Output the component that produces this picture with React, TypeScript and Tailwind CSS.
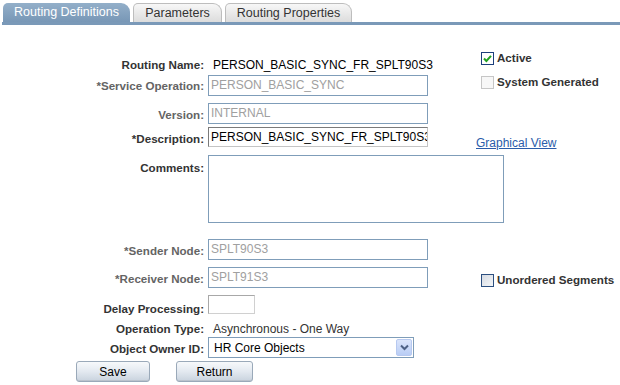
import React from 'react';

const font = "font-['Liberation_Sans',Arial,sans-serif]";

const Label = ({ text, muted, className = '' }: { text: string; muted?: boolean; className?: string }) => (
  <div
    className={`text-right text-[11.6px] leading-[14px] font-bold ${muted ? 'text-[#646464]' : 'text-[#333333]'} ${className}`}
  >
    {text}
  </div>
);

const ReadOnlyBox = ({ value, width = 'w-[220px]' }: { value: string; width?: string }) => (
  <div
    className={`${width} h-[21px] border border-[#7f9db9] bg-white px-[2px] text-[12px] leading-[19px] text-[#a0a0a0] whitespace-nowrap overflow-hidden`}
  >
    {value}
  </div>
);

const CheckBox = ({ checked, variant }: { checked?: boolean; variant: 'active' | 'disabled' | 'plain' }) => {
  const box =
    variant === 'disabled'
      ? 'border-[#c6c6c6] bg-[#f7f7f7]'
      : variant === 'active'
        ? 'border-[#1c3f7c] bg-white'
        : 'border-[#2c4f80] bg-gradient-to-br from-[#d6dbe3] to-[#f4f6f8]';
  return (
    <div className={`w-[13px] h-[13px] border ${box} flex items-center justify-center shrink-0`}>
      {checked ? (
        <svg width="9" height="9" viewBox="0 0 9 9">
          <path d="M1 4.5 L3.4 7 L8 1.8" fill="none" stroke="#21a121" strokeWidth="2" />
        </svg>
      ) : null}
    </div>
  );
};

const Tab = ({ label, active }: { label: string; active?: boolean }) => (
  <div
    className={`h-[19px] flex items-center justify-center rounded-tl-[5px] rounded-tr-[9px] text-[12.5px] ${
      active
        ? 'bg-gradient-to-b from-[#93afc9] to-[#7897b6] text-white'
        : 'border border-b-0 border-[#bdbdbd] bg-gradient-to-b from-[#f7f7f7] to-[#dcdcdc] text-[#333333]'
    }`}
  >
    {label}
  </div>
);

const Button = ({ label, width }: { label: string; width: string }) => (
  <div
    className={`${width} h-[21px] rounded-[3px] border border-[#9aa9b9] bg-gradient-to-b from-[#f7f9fb] via-[#e3e9f0] to-[#c9d3de] flex items-center justify-center text-[12px] text-black shadow-[inset_0_-1px_0_rgba(0,0,0,0.08)]`}
  >
    {label}
  </div>
);

const row = 'grid grid-cols-[204px_277px_1fr] gap-x-0';
const sideLabel = 'text-[11.6px] font-bold text-[#333333] leading-[14px]';

export default function App() {
  return (
    <div className={`${font} w-[620px] h-[385px] bg-white overflow-hidden`}>
      <div className="pt-[3px] pl-[3px] flex gap-[3px]">
        <div className="w-[127px]">
          <Tab label="Routing Definitions" active />
        </div>
        <div className="w-[89px]">
          <Tab label="Parameters" />
        </div>
        <div className="w-[127px]">
          <Tab label="Routing Properties" />
        </div>
      </div>
      <div className="ml-[2px] h-[3px] bg-[#7a99b8]" />

      {/* Routing Name */}
      <div className={`${row} mt-[26px] h-[22px]`}>
        <Label text="Routing Name:" className="pt-[7px]" />
        <div className="pl-[9px] pt-[7px] text-[12px] leading-[14px] text-black">PERSON_BASIC_SYNC_FR_SPLT90S3</div>
        <div className="flex items-center gap-[3px] h-[14px]">
          <CheckBox checked variant="active" />
          <span className={sideLabel}>Active</span>
        </div>
      </div>

      {/* Service Operation */}
      <div className={`${row} mt-[2px] h-[21px] items-center`}>
        <Label text="*Service Operation:" muted />
        <div className="pl-[4px]">
          <ReadOnlyBox value="PERSON_BASIC_SYNC" />
        </div>
        <div className="flex items-center gap-[3px] self-start h-[14px]">
          <CheckBox variant="disabled" />
          <span className={sideLabel}>System Generated</span>
        </div>
      </div>

      {/* Version */}
      <div className={`${row} mt-[7px] h-[21px] items-center`}>
        <Label text="Version:" muted className="pt-[3px]" />
        <div className="pl-[4px]">
          <ReadOnlyBox value="INTERNAL" />
        </div>
        <div />
      </div>

      {/* Description */}
      <div className={`${row} mt-[3px] h-[20px] items-center`}>
        <Label text="*Description:" className="pt-[3px]" />
        <div className="pl-[4px]">
          <div className="w-[220px] h-[20px] border border-[#7a7a7a] border-r-[#c4c4c4] border-b-[#c4c4c4] bg-white px-[2px] text-[12px] leading-[18px] text-black whitespace-nowrap overflow-hidden">
            PERSON_BASIC_SYNC_FR_SPLT90S3
          </div>
        </div>
        <div className="-ml-[5px] self-end mb-[-3px] text-[12px] leading-[14px] text-[#2a5caa] underline">
          Graphical View
        </div>
      </div>

      {/* Comments */}
      <div className={`${row} mt-[8px] h-[68px]`}>
        <Label text="Comments:" className="pt-[6px]" />
        <div className="pl-[4px] col-span-2">
          <div className="w-[296px] h-[68px] border border-[#7f9db9] bg-white" />
        </div>
      </div>

      {/* Sender Node */}
      <div className={`${row} mt-[16px] h-[21px] items-center`}>
        <Label text="*Sender Node:" muted className="pt-[3px]" />
        <div className="pl-[4px]">
          <ReadOnlyBox value="SPLT90S3" />
        </div>
        <div />
      </div>

      {/* Receiver Node */}
      <div className={`${row} mt-[7px] h-[21px] items-center`}>
        <Label text="*Receiver Node:" muted className="pt-[3px]" />
        <div className="pl-[4px]">
          <ReadOnlyBox value="SPLT91S3" />
        </div>
        <div className="flex items-center gap-[3px] self-end mb-[1px]">
          <CheckBox variant="plain" />
          <span className={sideLabel}>Unordered Segments</span>
        </div>
      </div>

      {/* Delay Processing */}
      <div className={`${row} mt-[7px] h-[19px]`}>
        <Label text="Delay Processing:" className="self-end mb-[-2px]" />
        <div className="pl-[4px]">
          <div className="w-[47px] h-[19px] border border-[#a8a8a8] border-r-[#d0d0d0] border-b-[#d0d0d0] bg-white" />
        </div>
        <div />
      </div>

      {/* Operation Type */}
      <div className={`${row} mt-[8px] h-[14px]`}>
        <Label text="Operation Type:" />
        <div className="pl-[9px] text-[12px] leading-[14px] text-[#333333]">Asynchronous - One Way</div>
        <div />
      </div>

      {/* Object Owner ID */}
      <div className={`${row} mt-[1px] h-[21px] items-center`}>
        <Label text="Object Owner ID:" className="pt-[3px]" />
        <div className="pl-[4px]">
          <div className="w-[206px] h-[21px] border border-[#7f9db9] bg-white flex items-center">
            <div className="flex-1 pl-[5px] text-[12px] text-black leading-[14px]">HR Core Objects</div>
            <div className="w-[16px] h-[17px] mr-[1px] rounded-[2px] border border-[#b7c9f0] bg-gradient-to-b from-[#dbe5fb] to-[#b9cdf5] flex items-center justify-center">
              <svg width="9" height="7" viewBox="0 0 9 7">
                <path d="M1 1.5 L4.5 5 L8 1.5" fill="none" stroke="#4d6185" strokeWidth="2" />
              </svg>
            </div>
          </div>
        </div>
        <div />
      </div>

      {/* Buttons */}
      <div className="mt-[3px] pl-[76px] flex gap-[26px]">
        <Button label="Save" width="w-[74px]" />
        <Button label="Return" width="w-[77px]" />
      </div>
    </div>
  );
}
